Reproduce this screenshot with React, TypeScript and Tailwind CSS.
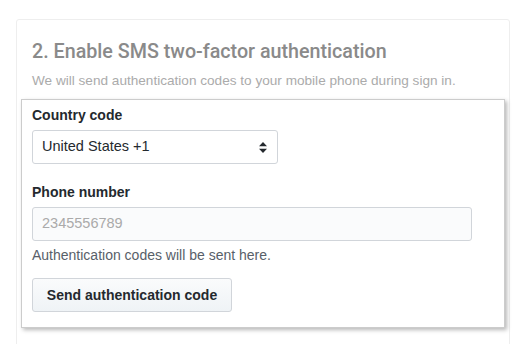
export default function App() {
  return (
    <div className="h-[344px] w-[528px] overflow-hidden bg-white pt-[19px] pl-4 font-['Liberation_Sans',Arial,sans-serif]">
      <div className="h-[400px] w-[494px] rounded-[3px] border border-[#eeeeee]">
        <div className="px-[15px] pt-[19px]">
          <h2 className="font-['Roboto',Arial,sans-serif] text-[19.7px] font-medium leading-[26px] text-[#8a8a8a]">
            2. Enable SMS two-factor authentication
          </h2>
          <p className="mt-[7px] text-[13.6px] leading-[18px] text-[#ababab]">
            We will send authentication codes to your mobile phone during sign in.
          </p>
        </div>
        <div className="mt-[9px] ml-[4px] w-[484px] border border-[#cccccc] bg-white px-[10px] pt-[6px] pb-[15px] shadow-[2px_2px_4px_rgba(0,0,0,0.28)]">
          <label className="block text-[14px] font-bold leading-[18px] text-[#24292e]">Country code</label>
          <div className="mt-[6px] flex h-[34px] w-[246px] items-center justify-between rounded-[3px] border border-[#d1d5da] bg-white pl-[9px] pr-[10px] text-[14.5px] text-[#24292e]">
            <span>United States +1</span>
            <svg width="8" height="11" viewBox="0 0 8 11">
              <path d="M4 0 L8 4.2 H0 Z" fill="#24292e" />
              <path d="M4 11 L8 6.8 H0 Z" fill="#24292e" />
            </svg>
          </div>
          <label className="mt-[19px] block text-[14px] font-bold leading-[18px] text-[#24292e]">Phone number</label>
          <div className="mt-[6px] flex h-[34px] w-[440px] items-center rounded-[3px] border border-[#d1d5da] bg-[#fafbfc] pl-[9px] text-[14.5px] text-[#aaaaaa]">
            2345556789
          </div>
          <p className="mt-[5px] text-[14px] leading-[18px] text-[#586069]">Authentication codes will be sent here.</p>
          <button className="mt-[14px] flex h-[34px] w-[200px] items-center justify-center rounded-[3px] border border-[#d1d5da] bg-gradient-to-b from-[#fafbfc] to-[#eff3f6] text-[14px] font-bold text-[#24292e]">
            Send authentication code
          </button>
        </div>
      </div>
    </div>
  );
}
